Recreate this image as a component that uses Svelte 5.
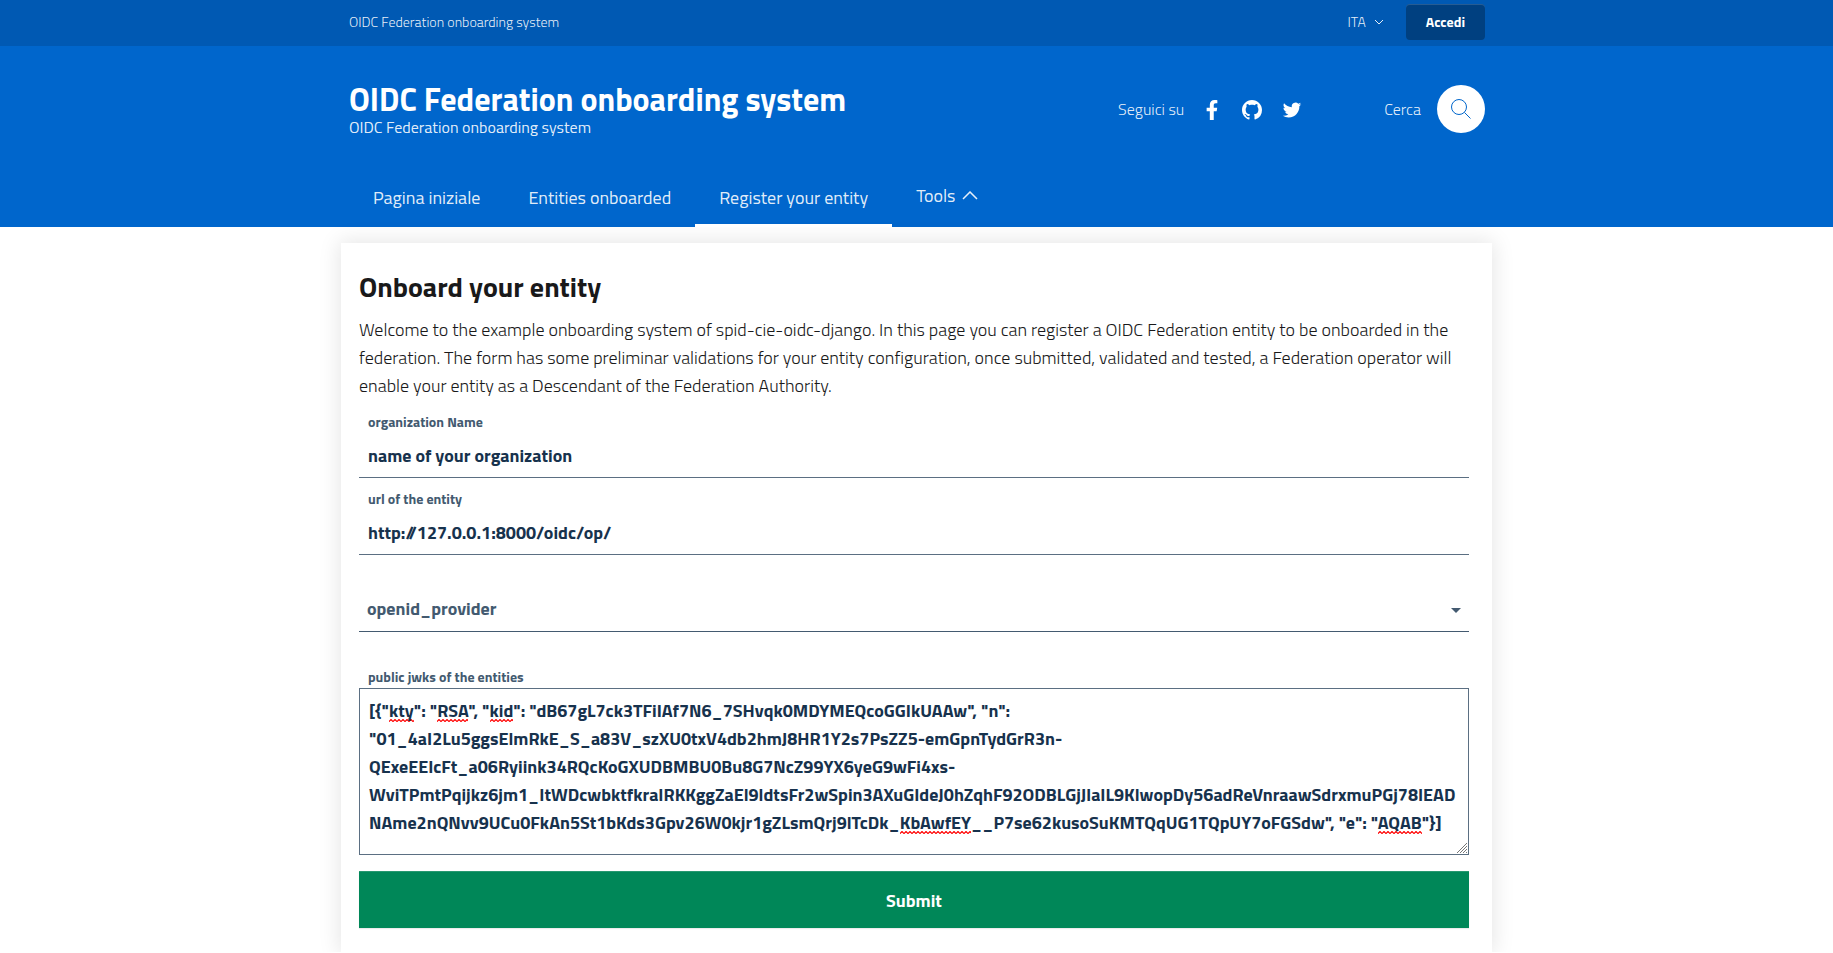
<script>
  const brand = 'OIDC Federation onboarding system';

  const links = [
    { label: 'Pagina iniziale', active: false },
    { label: 'Entities onboarded', active: false },
    { label: 'Register your entity', active: true }
  ];

  // Each line is a list of parts; `flag` marks words the spell checker underlines.
  const jwksLines = [
    [
      { t: '[{"' }, { t: 'kty', flag: true }, { t: '": "' }, { t: 'RSA', flag: true },
      { t: '", "' }, { t: 'kid', flag: true },
      { t: '": "dB67gL7ck3TFiIAf7N6_7SHvqk0MDYMEQcoGGIkUAAw", "n":' }
    ],
    [{ t: '"01_4aI2Lu5ggsElmRkE_S_a83V_szXU0txV4db2hmJ8HR1Y2s7PsZZ5-emGpnTydGrR3n-' }],
    [{ t: 'QExeEEIcFt_a06Ryiink34RQcKoGXUDBMBU0Bu8G7NcZ99YX6yeG9wFi4xs-' }],
    [{ t: 'WviTPmtPqijkz6jm1_ItWDcwbktfkraIRKKggZaEl9ldtsFr2wSpin3AXuGIdeJ0hZqhF92ODBLGjJlaIL9KlwopDy56adReVnraawSdrxmuPGj78IEAD' }],
    [
      { t: 'NAme2nQNvv9UCu0FkAn5St1bKds3Gpv26W0kjr1gZLsmQrj9lTcDk_' }, { t: 'KbAwfEY', flag: true },
      { t: '__P7se62kusoSuKMTQqUG1TQpUY7oFGSdw", "e": "' }, { t: 'AQAB', flag: true }, { t: '"}]' }
    ]
  ];

  let organization = $state('name of your organization');
  let url = $state('http://127.0.0.1:8000/oidc/op/');
  let entityType = $state('openid_provider');
  let jwks = $state(jwksLines.map((l) => l.map((p) => p.t).join('')).join('\n'));
</script>

<header>
  <div class="slim">
    <div class="container slim-row">
      <a class="slim-brand" href="#home">{brand}</a>
      <div class="slim-right">
        <button class="lang" type="button">
          ITA
          <svg width="10" height="6" viewBox="0 0 10 6" aria-hidden="true"><path d="M1 1l4 4 4-4" /></svg>
        </button>
        <button class="login" type="button">Accedi</button>
      </div>
    </div>
  </div>

  <div class="center">
    <div class="container center-row">
      <div class="brand">
        <a class="title" href="#home">{brand}</a>
        <span class="tagline">{brand}</span>
      </div>
      <div class="tools">
        <div class="social">
          <span>Seguici su</span>
          <div class="icons">
            <a href="#facebook" aria-label="Facebook">
              <svg width="20" height="20" viewBox="-96 0 512 512"><path d="M279.14 288l14.22-92.66h-88.91v-60.13c0-25.35 12.42-50.06 52.24-50.06h40.42V6.26S260.43 0 225.36 0c-73.22 0-121.08 44.38-121.08 124.72v70.62H22.89V288h81.39v224h100.17V288z" /></svg>
            </a>
            <a href="#github" aria-label="GitHub">
              <svg width="20" height="20" viewBox="0 0 16 16"><path d="M8 0C3.58 0 0 3.58 0 8c0 3.54 2.29 6.53 5.47 7.59.4.07.55-.17.55-.38 0-.19-.01-.82-.01-1.49-2.01.37-2.53-.49-2.69-.94-.09-.23-.48-.94-.82-1.13-.28-.15-.68-.52-.01-.53.63-.01 1.08.58 1.23.82.72 1.21 1.87.87 2.33.66.07-.52.28-.87.51-1.07-1.78-.2-3.64-.89-3.64-3.95 0-.87.31-1.59.82-2.15-.08-.2-.36-1.02.08-2.12 0 0 .67-.21 2.2.82.64-.18 1.32-.27 2-.27s1.36.09 2 .27c1.53-1.04 2.2-.82 2.2-.82.44 1.1.16 1.92.08 2.12.51.56.82 1.27.82 2.15 0 3.07-1.87 3.75-3.65 3.95.29.25.54.73.54 1.48 0 1.07-.01 1.93-.01 2.2 0 .21.15.46.55.38A8.01 8.01 0 0016 8c0-4.42-3.58-8-8-8z" /></svg>
            </a>
            <a href="#twitter" aria-label="Twitter">
              <svg width="20" height="20" viewBox="-1 -1 26 26"><path d="M23.953 4.57a10 10 0 01-2.825.775 4.958 4.958 0 002.163-2.723c-.951.555-2.005.959-3.127 1.184a4.92 4.92 0 00-8.384 4.482C7.69 8.095 4.067 6.13 1.64 3.162a4.822 4.822 0 00-.666 2.475c0 1.71.87 3.213 2.188 4.096a4.904 4.904 0 01-2.228-.616v.06a4.923 4.923 0 003.946 4.827 4.996 4.996 0 01-2.212.085 4.936 4.936 0 004.604 3.417 9.867 9.867 0 01-6.102 2.105c-.39 0-.779-.023-1.17-.067a13.995 13.995 0 007.557 2.209c9.053 0 13.998-7.496 13.998-13.985 0-.21 0-.42-.015-.63A9.935 9.935 0 0024 4.59z" /></svg>
            </a>
          </div>
        </div>
        <div class="search">
          <span>Cerca</span>
          <button type="button" aria-label="Cerca">
            <svg width="24" height="24" viewBox="0 0 24 24"><circle cx="10" cy="10" r="7.5" /><path d="M15.4 15.4l6.1 6.1" /></svg>
          </button>
        </div>
      </div>
    </div>
  </div>

  <nav class="container">
    {#each links as link}
      <a class="link" class:active={link.active} href="#{link.label}">{link.label}</a>
    {/each}
    <button class="dropdown" type="button">
      Tools
      <svg width="16" height="10" viewBox="0 0 16 10" aria-hidden="true"><path d="M1 8l7-7 7 7" /></svg>
    </button>
  </nav>
</header>

<main>
  <h1>Onboard your entity</h1>
  <p>
    Welcome to the example onboarding system of spid-cie-oidc-django. In this page you can register a OIDC Federation entity to be onboarded in the federation. The form has some preliminar validations for your entity configuration, once submitted, validated and tested, a Federation operator will enable your entity as a Descendant of the Federation Authority.
  </p>
  <form onsubmit={(e) => e.preventDefault()}>
    <div class="field">
      <label for="organization">organization Name</label>
      <input id="organization" type="text" bind:value={organization} />
    </div>
    <div class="field">
      <label for="url">url of the entity</label>
      <input id="url" type="text" bind:value={url} />
    </div>
    <div class="picker">
      <select aria-label="entity type" bind:value={entityType}>
        <option value="openid_provider">openid_provider</option>
      </select>
      <svg width="10" height="5" viewBox="0 0 10 5" aria-hidden="true"><path d="M0 0h10l-5 5z" /></svg>
    </div>
    <div class="jwks">
      <label for="jwks">public jwks of the entities</label>
      <div class="editor">
        <div class="marks" aria-hidden="true">{#each jwksLines as line}<div>{#each line as part}<span class:flag={part.flag}>{part.t}</span>{/each}</div>{/each}</div>
        <textarea id="jwks" spellcheck="false" bind:value={jwks}></textarea>
      </div>
    </div>
    <button class="submit" type="submit">Submit</button>
  </form>
</main>

<style>
  :global(body) {
    margin: 0;
    background: #fff;
    color: #19191a;
    font-family: 'Titillium Web', Lato, sans-serif;
    font-size: 18px;
    line-height: 28px;
  }

  :global(body *) {
    box-sizing: border-box;
  }

  a {
    color: inherit;
    text-decoration: none;
  }

  button,
  input,
  select,
  textarea {
    margin: 0;
    border: 0;
    border-radius: 0;
    background: none;
    color: inherit;
    font: inherit;
  }

  .container {
    max-width: 1185px;
    margin: 0 auto;
    padding: 0 24px 0 25px;
  }

  header {
    background: #0066cc;
    color: #fff;
    font-weight: 300;
  }

  .slim {
    background: #0059b3;
    font-size: 14px;
    line-height: 20px;
  }

  .slim-row {
    display: flex;
    align-items: center;
    justify-content: space-between;
    height: 46px;
    padding-bottom: 2px;
  }

  .slim-right {
    display: flex;
    align-items: center;
    gap: 22px;
  }

  .lang {
    display: flex;
    align-items: center;
    gap: 8px;
    padding: 0;
  }

  .slim-brand,
  .lang,
  .tagline,
  .social > span,
  .search > span,
  nav {
    color: rgba(255, 255, 255, 0.9);
  }

  svg {
    display: block;
    fill: currentColor;
  }

  .lang svg,
  .dropdown svg,
  .search svg {
    fill: none;
    stroke: currentColor;
    stroke-width: 1;
  }

  .login {
    height: 36px;
    padding: 0 20px;
    border-radius: 4px;
    background: #004080;
    box-shadow: inset 0 1px 0 rgba(255, 255, 255, 0.15);
    font-weight: 700;
  }

  .center-row {
    display: flex;
    align-items: center;
    justify-content: space-between;
    height: 126px;
  }

  .brand {
    display: flex;
    flex-direction: column;
  }

  .title {
    font-size: 32px;
    font-weight: 700;
    line-height: 36px;
  }

  .tagline {
    font-size: 16px;
    font-weight: 400;
    line-height: 20px;
  }

  .tools,
  .social,
  .icons,
  .search {
    display: flex;
    align-items: center;
    font-size: 16px;
  }

  .tools {
    gap: 82px;
  }

  .social {
    gap: 18px;
  }

  .icons {
    gap: 20px;
    padding-top: 2px;
  }

  .search {
    gap: 16px;
  }

  .search button {
    display: grid;
    place-items: center;
    width: 48px;
    height: 48px;
    padding: 0;
    border-radius: 50%;
    background: #fff;
    color: #0066cc;
  }

  nav {
    display: flex;
    font-weight: 400;
  }

  .link {
    padding: 12px 24px;
    border-bottom: 3px solid transparent;
  }

  .link.active {
    border-color: #fff;
  }

  .dropdown {
    display: flex;
    align-items: center;
    gap: 6px;
    padding: 0 24px 8px;
  }

  .dropdown svg {
    stroke-width: 1.5;
  }

  main {
    max-width: 1151px;
    margin: 16px auto 0;
    padding: 24px 23px 24px 18px;
    background: #fff;
    box-shadow: 0 0 20px 2px rgba(0, 0, 0, 0.1);
  }

  h1 {
    margin: 0 0 9px;
    font-size: 28px;
    font-weight: 700;
    line-height: 40px;
  }

  p {
    margin: 0;
    font-weight: 300;
  }

  form {
    display: flex;
    flex-direction: column;
    padding-top: 12px;
    color: #17324d;
    font-weight: 700;
  }

  label {
    padding-left: 9px;
    color: #435a70;
    font-size: 14px;
    line-height: 20px;
  }

  .field {
    display: flex;
    flex-direction: column;
    padding-bottom: 11px;
  }

  input {
    width: 100%;
    height: 46px;
    padding: 2px 9px 0;
    border-bottom: 1px solid #5b6f82;
  }

  .picker {
    display: grid;
    align-items: center;
    margin-top: 22px;
  }

  select {
    grid-area: 1 / 1;
    width: 100%;
    height: 44px;
    padding: 0 8px 1px;
    border-bottom: 1px solid #435a70;
    appearance: none;
    color: #435a70;
  }

  .picker svg {
    grid-area: 1 / 1;
    justify-self: end;
    margin-right: 8px;
    color: #435a70;
    pointer-events: none;
  }

  .jwks {
    display: flex;
    flex-direction: column;
    margin-top: 35px;
  }

  .editor {
    display: grid;
    margin-top: 1px;
  }

  .marks,
  textarea {
    grid-area: 1 / 1;
    width: 100%;
    padding: 8px 9px;
    border: 1px solid #5b6f82;
    white-space: pre;
    overflow: hidden;
  }

  .marks {
    color: transparent;
    border-color: transparent;
  }

  .flag {
    background: url("data:image/svg+xml,%3Csvg xmlns='http://www.w3.org/2000/svg' width='4' height='3'%3E%3Cpath d='M-1 3.5L2 .5l3 3' fill='none' stroke='red' stroke-width='1.2'/%3E%3C/svg%3E") repeat-x 0 calc(100% - 2px);
  }

  textarea {
    display: block;
    height: 167px;
    resize: vertical;
  }

  textarea::-webkit-resizer {
    background: url("data:image/svg+xml,%3Csvg xmlns='http://www.w3.org/2000/svg' width='12' height='12'%3E%3Cpath d='M1 11L11 1M4 11l7-7M7 11l4-4M10 11l1-1' stroke='%23777'/%3E%3C/svg%3E") no-repeat right bottom;
  }

  .submit {
    height: 57px;
    margin-top: 16px;
    padding: 2px 0 0;
    background: #008758;
    box-shadow: inset 0 1px 0 rgba(255, 255, 255, 0.15), 0 1px 1px rgba(0, 0, 0, 0.08);
    color: #fff;
  }
</style>
